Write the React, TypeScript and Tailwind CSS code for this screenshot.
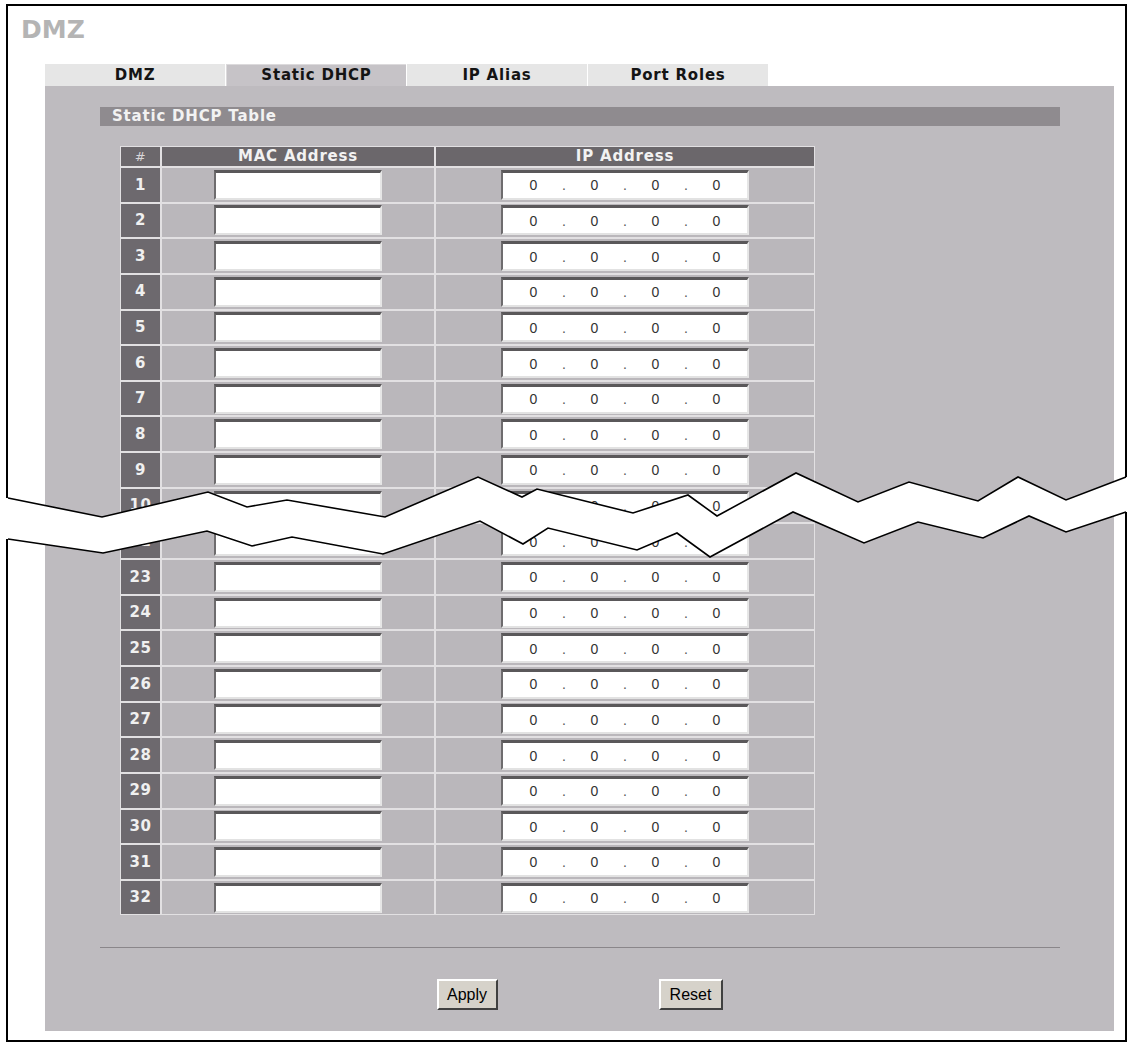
import React from "react";

const rows = [1, 2, 3, 4, 5, 6, 7, 8, 9, 10, 22, 23, 24, 25, 26, 27, 28, 29, 30, 31, 32];

const upper: [number, number][] = [
  [8, 498], [102, 517], [208, 492], [247, 507], [287, 500], [385, 517], [478, 477], [522, 497],
  [537, 489], [633, 513], [688, 495], [717, 516], [796, 473], [858, 502], [909, 482], [978, 501],
  [1018, 477], [1066, 500], [1126, 477],
];
const lower: [number, number][] = [
  [8, 539], [103, 553], [207, 531], [252, 546], [292, 537], [383, 554], [480, 521], [523, 544],
  [548, 528], [637, 550], [677, 533], [710, 557], [793, 512], [864, 543], [918, 522], [983, 538],
  [1029, 516], [1066, 532], [1126, 512],
];

const pts = (a: [number, number][]) => a.map(([x, y]) => `${x},${y}`).join(" ");

function MacInput() {
  return (
    <div className="w-[168px] h-[30px] bg-white border-t-[3px] border-l-2 border-b-2 border-r-2 border-t-[#5a585a] border-l-[#6e6c6e] border-b-[#e2e2e2] border-r-[#e6e6e6]" />
  );
}

function IpInput() {
  return (
    <div className="w-[248px] h-[30px] bg-white border-t-[3px] border-l-2 border-b-2 border-r-2 border-t-[#5a585a] border-l-[#6e6c6e] border-b-[#e2e2e2] border-r-[#e6e6e6] flex items-center font-['Liberation_Sans',Arial,sans-serif] text-[14px] text-[#333333]">
      {[0, 1, 2, 3].map((i) => (
        <React.Fragment key={i}>
          <span className="w-[62px] text-center leading-none">0</span>
          {i < 3 && (
            <span className="w-0 flex justify-center leading-none text-[#555]">.</span>
          )}
        </React.Fragment>
      ))}
    </div>
  );
}

export default function App() {
  return (
    <div className="relative w-[1131px] h-[1046px] bg-white overflow-hidden">
      <div className="ml-[6px] mt-[4px] w-[1121px] h-[1038px] border-2 border-black">
        <div className="pl-[13px] mt-[11px] h-[25px] leading-[25px] text-[25px] font-bold text-[#b4b4b4] font-['DejaVu_Sans',Verdana,sans-serif]">
          DMZ
        </div>
        <div className="ml-[37px] mt-[22px] flex gap-[1px] h-[22px] font-['DejaVu_Sans',Verdana,sans-serif] text-[15px] font-bold tracking-[0.8px] text-[#141414]">
          <div className="w-[180px] bg-[#e6e6e6] flex items-center justify-center">DMZ</div>
          <div className="w-[180px] bg-[#c6c3c7] border-l border-t border-[#dcdadc] flex items-center justify-center">Static DHCP</div>
          <div className="w-[180px] bg-[#e6e6e6] flex items-center justify-center">IP Alias</div>
          <div className="w-[180px] bg-[#e6e6e6] flex items-center justify-center">Port Roles</div>
        </div>
        <div className="ml-[37px] w-[1069px] h-[945px] bg-[#bebbbf] pt-[21px] flex flex-col font-['DejaVu_Sans',Verdana,sans-serif]">
          <div className="ml-[55px] w-[960px] h-[19px] bg-[#8f8b8f] pl-[12px] leading-[19px] text-[15px] font-bold tracking-[0.8px] text-[#f2f2f2]">
            Static DHCP Table
          </div>
          <div className="ml-[75px] mt-[20px] w-[695px] bg-[#e2e0e2] p-[1px] flex flex-col gap-[2px]">
            <div className="flex h-[19px] gap-[2px] bg-[#e2e0e2] text-[15px] font-bold tracking-[0.8px] text-[#f2f2f2] leading-[19px]">
              <div className="w-[39px] bg-[#6b676b] text-center text-[#d8d6d8] font-normal text-[13px]">#</div>
              <div className="w-[272px] bg-[#6b676b] text-center">MAC Address</div>
              <div className="w-[378px] bg-[#6b676b] text-center">IP Address</div>
            </div>
            {rows.map((n) => (
              <div key={n} className="flex h-[33.65px] gap-[2px]">
                <div className="w-[39px] bg-[#6d696e] flex items-center justify-center text-[15px] font-bold text-[#f0f0f0] tracking-[0.5px]">
                  {n}
                </div>
                <div className="w-[272px] bg-[#bab7bb] flex items-center justify-center">
                  <MacInput />
                </div>
                <div className="w-[378px] bg-[#bab7bb] flex items-center justify-center">
                  <IpInput />
                </div>
              </div>
            ))}
          </div>
          <div className="ml-[55px] mt-[32px] w-[960px] h-[1px] bg-[#8a868a]" />
          <div className="mt-[31px] flex justify-center gap-[161px] font-['Liberation_Sans',Arial,sans-serif] text-[16px] text-black">
            <button className="h-[31px] w-[61px] bg-[#d6d2ca] border-2 border-t-white border-l-white border-r-[#404040] border-b-[#404040] leading-none">
              Apply
            </button>
            <button className="h-[31px] w-[64px] bg-[#d6d2ca] border-2 border-t-white border-l-white border-r-[#404040] border-b-[#404040] leading-none">
              Reset
            </button>
          </div>
        </div>
      </div>
      <svg
        className="absolute left-0 top-0 pointer-events-none"
        width="1131"
        height="1046"
        viewBox="0 0 1131 1046"
      >
        <polygon
          points={`0,498 ${pts(upper)} 1131,477 1131,512 ${pts([...lower].reverse())} 0,539`}
          fill="white"
        />
        <polyline points={pts(upper)} fill="none" stroke="black" strokeWidth="1.6" strokeLinejoin="miter" />
        <polyline points={pts(lower)} fill="none" stroke="black" strokeWidth="1.6" strokeLinejoin="miter" />
      </svg>
    </div>
  );
}
